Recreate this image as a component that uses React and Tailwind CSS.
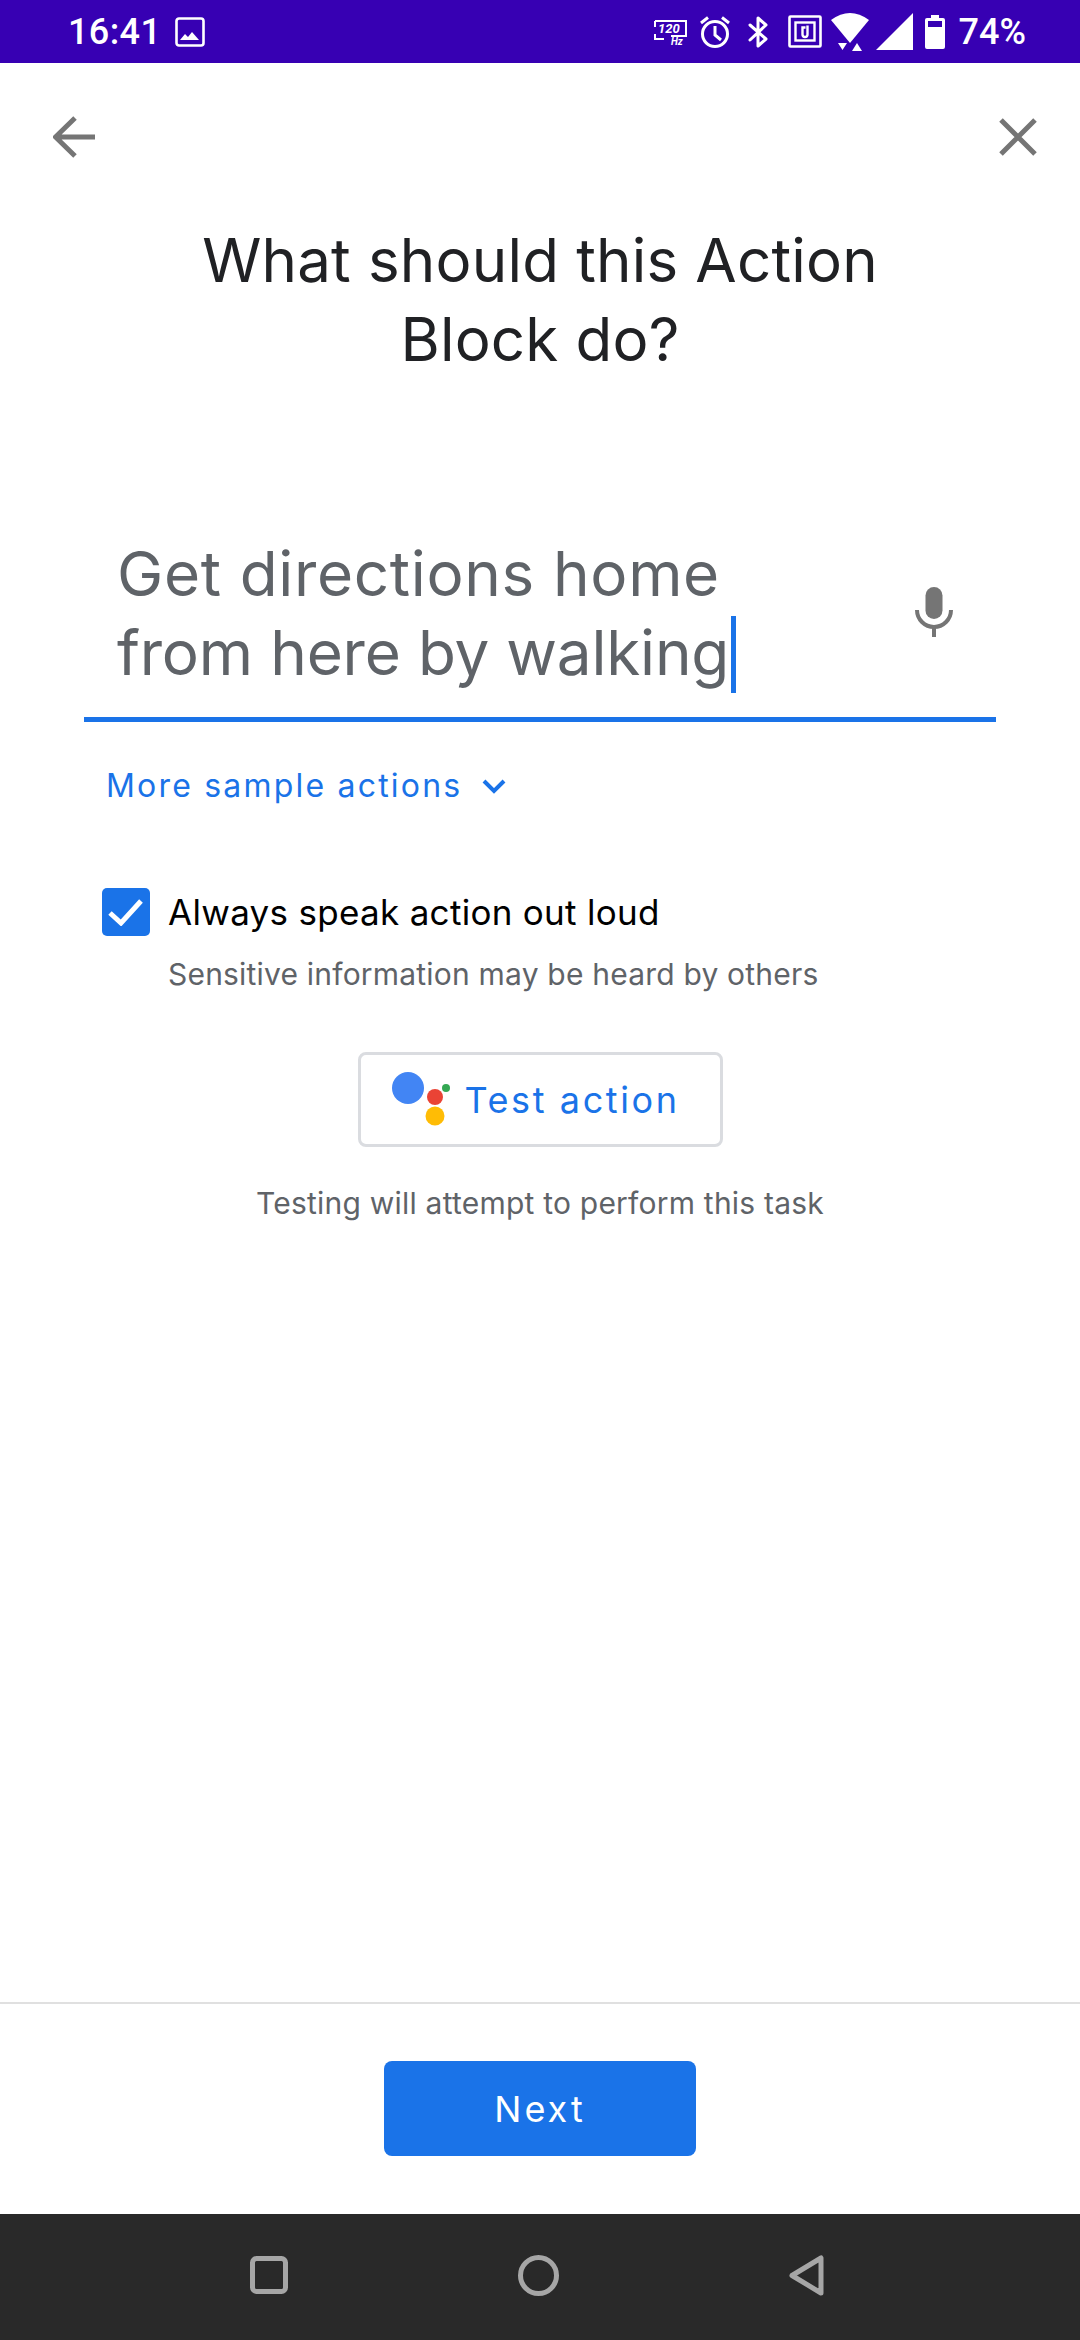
export default function App() {
  const font = { fontFamily: 'Inter, sans-serif' };
  return (
    <div className="w-[1080px] h-[2340px] flex flex-col bg-white overflow-hidden font-['Roboto',sans-serif]">
      <div className="h-[63px] shrink-0 bg-[#3700b3] flex items-center text-white pl-[68px] pr-[54px]">
        <span className="text-[36px] font-medium leading-none tracking-[0.4px]">16:41</span>
        <svg className="ml-[14px]" width="30" height="30" viewBox="0 0 30 30">
          <rect x="1.5" y="1.5" width="27" height="27" rx="2.5" fill="none" stroke="#fff" strokeWidth="2.6" />
          <path d="M5 23l5-6 3 3 4-5 7 8z" fill="#fff" />
        </svg>
        <div className="ml-auto flex items-center">
          <svg width="36" height="28" viewBox="0 0 36 28">
            <path d="M3 3h31v15H19M12 21H3v-5M3 9V3M34 8v8" fill="none" stroke="#fff" strokeWidth="2" />
            <text x="6" y="15" fontSize="13" fontStyle="italic" fontWeight="700" fill="#fff" fontFamily="Roboto">120</text>
            <text x="19" y="27" fontSize="10" fontStyle="italic" fontWeight="700" fill="#fff" fontFamily="Roboto">Hz</text>
          </svg>
          <svg className="ml-[11px]" width="32" height="34" viewBox="0 0 32 34">
            <circle cx="16" cy="19" r="12.5" fill="none" stroke="#fff" strokeWidth="3" />
            <path d="M16 11v9l6 5M2 8l7-5.500M30 8l-7-5.500" fill="none" stroke="#fff" strokeWidth="3" />
          </svg>
          <svg className="ml-[17px]" width="20" height="32" viewBox="0 0 20 32">
            <path d="M2 9l16 14-8 7V2l8 7L2 24" fill="none" stroke="#fff" strokeWidth="3" strokeLinejoin="round" strokeLinecap="round" />
          </svg>
          <svg className="ml-[20px]" width="34" height="33" viewBox="0 0 34 33">
            <rect x="1.500" y="1.500" width="31" height="30" rx="1" fill="none" stroke="#fff" strokeWidth="2.6" />
            <rect x="7.500" y="7.500" width="19" height="18" fill="none" stroke="#fff" strokeWidth="2.4" />
            <path d="M19.500 10.500v9a2.500 2.500 0 1 1-5 0v-7h3" fill="none" stroke="#fff" strokeWidth="2.4" />
          </svg>
          <svg className="ml-[9px]" width="38" height="41" viewBox="0 0 38 41">
            <path d="M0 9Q19 -5 38 9L19 32z" fill="#fff" />
            <path d="M7 32h9l-4.500 7zM21 40l5-8 5 8z" fill="#fff" />
          </svg>
          <svg className="ml-[7px]" width="38" height="37" viewBox="0 0 38 37">
            <path d="M0 37L37 0v37z" fill="#fff" />
          </svg>
          <svg className="ml-[11px]" width="20" height="34" viewBox="0 0 20 34">
            <path d="M6 0h8v3h4a2 2 0 0 1 2 2v27a2 2 0 0 1-2 2H2a2 2 0 0 1-2-2V5a2 2 0 0 1 2-2h4z" fill="#fff" />
            <rect x="3" y="6" width="14" height="6" fill="#3700b3" />
          </svg>
          <span className="ml-[14px] text-[36px] font-medium leading-none">74%</span>
        </div>
      </div>

      <div className="flex-1 flex flex-col min-h-0">
        <div className="flex items-center justify-between pl-[53px] pr-[43px] pt-[53px]">
          <svg width="42" height="42" viewBox="0 0 42 42">
            <path d="M42 21H3M22 2L2.500 21 22 40" fill="none" stroke="#757575" strokeWidth="5" />
          </svg>
          <svg width="38" height="38" viewBox="0 0 38 38">
            <path d="M2 2l34 34M36 2L2 36" fill="none" stroke="#757575" strokeWidth="5" />
          </svg>
        </div>

        <h1 style={font} className="mt-[63px] text-center text-[60px] leading-[79px] font-normal tracking-[0.2px] text-[#202124]">
          What should this Action<br />Block do?
        </h1>

        <div className="mx-[84px] mt-[135px] h-[208px] border-b-[5px] border-[#1a73e8] flex pl-[33px] pr-[43px] relative">
          <div style={font} className="text-[62px] leading-[79px] tracking-[-0.2px] text-[#5f6368] pt-[20px]">
            <span className="tracking-[0.65px]">Get directions home</span><br />
            <span className="relative">from here by walking<span className="absolute right-[-7px] top-[1px] w-[5px] h-[77px] bg-[#1a73e8]" /></span>
          </div>
          <svg className="ml-auto mt-[73px]" width="38" height="50" viewBox="0 0 38 50">
            <rect x="10.500" y="0" width="17" height="32" rx="8.500" fill="#757575" />
            <path d="M2 23a17 17 0 0 0 34 0" fill="none" stroke="#757575" strokeWidth="4" />
            <path d="M19 38v12" stroke="#757575" strokeWidth="4" />
          </svg>
        </div>

        <div className="ml-[106px] mt-[44px] flex items-center text-[#1a73e8]">
          <span style={font} className="text-[32px] leading-[40px] tracking-[2.2px]">More sample actions</span>
          <svg className="ml-[20px] mt-[2px]" width="24" height="16" viewBox="0 0 24 16">
            <path d="M2 2l10 10L22 2" fill="none" stroke="#1a73e8" strokeWidth="4" />
          </svg>
        </div>

        <div className="ml-[102px] mt-[82px] flex items-center h-[48px]">
          <div className="w-[48px] h-[48px] rounded-[5px] bg-[#1a73e8] flex items-center justify-center">
            <svg width="36" height="28" viewBox="0 0 36 28">
              <path d="M2 15l11 10L33 3" fill="none" stroke="#fff" strokeWidth="5" />
            </svg>
          </div>
          <span style={font} className="ml-[18px] text-[35px] leading-[48px] tracking-[0.3px] text-black">Always speak action out loud</span>
        </div>
        <p style={font} className="ml-[168px] mt-[18px] text-[30px] leading-[40px] tracking-[0.2px] text-[#5f6368]">Sensitive information may be heard by others</p>

        <div className="mt-[58px] self-center w-[365px] h-[95px] rounded-[8px] border-[3px] border-[#dadce0] flex items-center pl-[31px]">
          <svg width="60" height="56" viewBox="0 0 60 56">
            <circle cx="16" cy="16" r="16" fill="#4285f4" />
            <circle cx="43" cy="44" r="9.500" fill="#ffbc05" />
            <circle cx="43" cy="25" r="8" fill="#ea4335" />
            <circle cx="54" cy="16" r="4" fill="#34a853" />
          </svg>
          <span style={font} className="ml-[13px] text-[36px] leading-none tracking-[2.6px] text-[#1a73e8]">Test action</span>
        </div>

        <p style={font} className="mt-[36px] text-center text-[30px] leading-[40px] tracking-[0.22px] text-[#5f6368]">Testing will attempt to perform this task</p>

        <div className="mt-auto border-t-2 border-[#e0e0e0] h-[212px] flex justify-center pt-[57px]">
          <div className="w-[312px] h-[95px] rounded-[8px] bg-[#1a73e8] flex items-center justify-center">
            <span style={font} className="text-white text-[36px] tracking-[3px]">Next</span>
          </div>
        </div>
      </div>

      <div className="h-[126px] shrink-0 bg-[#292929] flex items-center gap-[230px] pl-[250px] pb-[4px]">
        <svg width="38" height="38" viewBox="0 0 38 38">
          <rect x="2.500" y="2.500" width="33" height="33" rx="4" fill="none" stroke="#a6a6a6" strokeWidth="5" />
        </svg>
        <svg width="41" height="41" viewBox="0 0 41 41">
          <circle cx="20.500" cy="20.500" r="18" fill="none" stroke="#a6a6a6" strokeWidth="5" />
        </svg>
        <svg width="35" height="41" viewBox="0 0 35 41">
          <path d="M32 3v35L3 20.500z" fill="none" stroke="#a6a6a6" strokeWidth="5" strokeLinejoin="round" />
        </svg>
      </div>
    </div>
  );
}
